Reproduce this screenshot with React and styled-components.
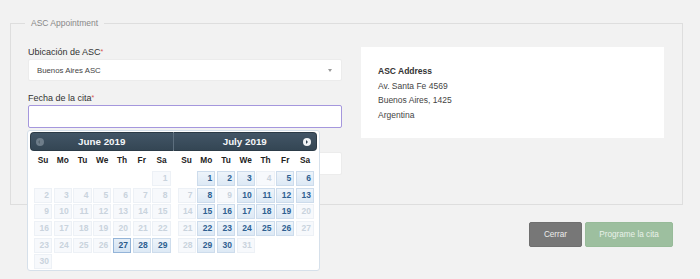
import styled, { createGlobalStyle, css } from "styled-components";

const GlobalStyle = createGlobalStyle`
  html, body {
    margin: 0;
    min-height: 279px;
    background: #f2f2f2;
    font-family: "Liberation Sans", Arial, sans-serif;
    color: #333;
  }
`;

const Page = styled.div`
  box-sizing: border-box;
  min-height: 279px;
  padding: 17px 17px 0 10px;
`;

const Fieldset = styled.fieldset`
  box-sizing: border-box;
  width: 673px;
  margin: 0;
  padding: 16px 18px 29px 17px;
  border: 1px solid #dedede;
  min-width: 0;
  overflow: visible;
`;

const Legend = styled.legend`
  margin-left: -3px;
  padding: 0 6px;
  font-size: 8.5px;
  line-height: 12px;
  color: #888;
`;

const Columns = styled.div`
  display: flex;
  gap: 19px;
  align-items: flex-start;
`;

const FormColumn = styled.div`
  width: 314px;
  display: flex;
  flex-direction: column;
  gap: 10px;
`;

const Group = styled.div`
  position: relative;
`;

const Label = styled.div`
  height: 14px;
  font-size: 9px;
  line-height: 14px;
  color: #333;
`;

const Req = styled.span`
  color: #d9534f;
  font-size: 7px;
  vertical-align: top;
`;

const SelectBox = styled.div`
  box-sizing: border-box;
  height: ${(p) => p.$h || 23}px;
  background: #fff;
  border: 1px solid #ececec;
  border-radius: 2px;
  padding: 0 8px;
  display: flex;
  align-items: center;
  justify-content: space-between;
  font-size: 7.8px;
  color: #444;
  &::after {
    content: "";
    border-left: 2.5px solid transparent;
    border-right: 2.5px solid transparent;
    border-top: 3.5px solid #999;
    margin-right: 1px;
  }
`;

const Input = styled.div`
  box-sizing: border-box;
  height: 23px;
  background: #fff;
  border: 1px solid #a597dd;
  border-radius: 2px;
`;

const AddressBox = styled.div`
  box-sizing: border-box;
  width: 303px;
  margin-top: 2px;
  background: #fff;
  padding: 17px 17px 16px;
  font-size: 8.5px;
  line-height: 14.5px;
  color: #444;
`;

const AddressTitle = styled.div`
  font-weight: bold;
  color: #333;
`;

const Popup = styled.div`
  position: absolute;
  left: -1px;
  top: calc(100% + 2px);
  z-index: 5;
  box-sizing: border-box;
  width: 293px;
  height: 141px;
  padding: 1px 2px 2px;
  background: #fff;
  border: 1px solid #d6e0ea;
  border-radius: 3px;
  display: flex;
  align-items: flex-start;
  font-family: "Liberation Sans", Arial, sans-serif;
`;

const Month = styled.div`
  flex: 1;
  display: flex;
  flex-direction: column;
`;

const MonthHeader = styled.div`
  position: relative;
  height: 19px;
  box-sizing: border-box;
  background: linear-gradient(#425566, #344654);
  border: 1px solid #2c3b47;
  color: #f4f6f8;
  font-weight: bold;
  font-size: 9.8px;
  display: flex;
  align-items: center;
  justify-content: center;
  ${(p) =>
    p.$first
      ? css`
          border-radius: 4px 0 0 4px;
          border-right-color: #5d6f7e;
        `
      : css`
          border-radius: 0 4px 4px 0;
          border-left: none;
        `}
`;

const NavIcon = styled.span`
  position: absolute;
  top: 50%;
  ${(p) => (p.$next ? "right: 5px;" : "left: 5px;")}
  width: 8px;
  height: 8px;
  margin-top: -4px;
  border-radius: 50%;
  background: ${(p) => (p.$next ? "#f2f4f6" : "#6e7d8a")};
  &::after {
    content: "";
    position: absolute;
    top: 2px;
    ${(p) =>
      p.$next
        ? "left: 3px; border-left: 2.5px solid #344654;"
        : "left: 2px; border-right: 2.5px solid #56656f;"}
    border-top: 2px solid transparent;
    border-bottom: 2px solid transparent;
  }
`;

const DayNames = styled.div`
  display: grid;
  grid-template-columns: repeat(7, 1fr);
  column-gap: 1.7px;
  padding: 0 3px 0 4px;
  height: 19px;
  line-height: 19px;
  margin-bottom: 1px;
  font-size: 8.3px;
  font-weight: bold;
  color: #222;
  text-align: center;
`;

const Days = styled.div`
  display: grid;
  grid-template-columns: repeat(7, 1fr);
  grid-auto-rows: 15px;
  column-gap: 1.7px;
  row-gap: 1.7px;
  padding: 0 3px 0 4px;
`;

const Day = styled.div`
  box-sizing: border-box;
  border: 1px solid transparent;
  font-size: 8.5px;
  font-weight: bold;
  text-align: right;
  padding-right: 2px;
  line-height: 13px;
  ${(p) =>
    p.$state === "off" &&
    css`
      background: #f7f9fc;
      border-color: #edf1f6;
      color: #c9d3dd;
    `}
  ${(p) =>
    p.$state === "on" &&
    css`
      background: linear-gradient(#eef4fa, #dde9f5);
      border-color: #cddcec;
      color: #2e5f91;
    `}
  ${(p) =>
    p.$state === "hl" &&
    css`
      background: linear-gradient(#e6eff8, #d3e3f3);
      border-color: #94b4d8;
      color: #2a5a8a;
    `}
`;

const ButtonRow = styled.div`
  display: flex;
  justify-content: flex-end;
  gap: 3px;
  margin-top: 17px;
  padding-right: 10px;
`;

const Button = styled.button`
  height: 25px;
  padding: 0;
  width: ${(p) => p.$w}px;
  border: 1px solid ${(p) => (p.$primary ? "#97bb99" : "#6f6f6f")};
  border-radius: 2px;
  background: ${(p) => (p.$primary ? "#9dbf9f" : "#777")};
  color: ${(p) => (p.$primary ? "#e9f1e9" : "#ececec")};
  font-family: "Liberation Sans", Arial, sans-serif;
  font-size: 8.2px;
`;

const buildMonth = (startDay, total, enabled, highlight) => {
  const cells = [];
  for (let i = 0; i < startDay; i++) cells.push({ key: "e" + i });
  for (let d = 1; d <= total; d++) {
    let state = enabled.includes(d) ? "on" : "off";
    if (d === highlight) state = "hl";
    cells.push({ key: d, d, state });
  }
  return cells;
};

const months = [
  {
    title: "June 2019",
    cells: buildMonth(6, 30, [28, 29], 27),
  },
  {
    title: "July 2019",
    cells: buildMonth(
      1,
      31,
      [1, 2, 3, 5, 6, 8, 10, 11, 12, 13, 15, 16, 17, 18, 19, 22, 23, 24, 25, 26, 29, 30],
      null
    ),
  },
];

const dayNames = ["Su", "Mo", "Tu", "We", "Th", "Fr", "Sa"];

const Datepicker = () => (
  <Popup>
    {months.map((m, i) => (
      <Month key={m.title}>
        <MonthHeader $first={i === 0}>
          {i === 0 && <NavIcon />}
          {m.title}
          {i === 1 && <NavIcon $next />}
        </MonthHeader>
        <DayNames>
          {dayNames.map((n) => (
            <div key={n}>{n}</div>
          ))}
        </DayNames>
        <Days>
          {m.cells.map((c) =>
            c.d ? (
              <Day key={c.key} $state={c.state}>
                {c.d}
              </Day>
            ) : (
              <div key={c.key} />
            )
          )}
        </Days>
      </Month>
    ))}
  </Popup>
);

export default function App() {
  return (
    <>
      <GlobalStyle />
      <Page>
        <Fieldset>
          <Legend>ASC Appointment</Legend>
          <Columns>
            <FormColumn>
              <Group>
                <Label>
                  Ubicación de ASC<Req>*</Req>
                </Label>
                <SelectBox $h={22}>Buenos Aires ASC</SelectBox>
              </Group>
              <Group>
                <Label>
                  Fecha de la cita<Req>*</Req>
                </Label>
                <Group>
                  <Input />
                  <Datepicker />
                </Group>
              </Group>
              <Group>
                {/* label hidden under the open datepicker */}
                <Label />
                <SelectBox />
              </Group>
            </FormColumn>
            <AddressBox>
              <AddressTitle>ASC Address</AddressTitle>
              <div>Av. Santa Fe 4569</div>
              <div>Buenos Aires, 1425</div>
              <div>Argentina</div>
            </AddressBox>
          </Columns>
        </Fieldset>
        <ButtonRow>
          <Button $w={53}>Cerrar</Button>
          <Button $w={88} $primary>
            Programe la cita
          </Button>
        </ButtonRow>
      </Page>
    </>
  );
}
